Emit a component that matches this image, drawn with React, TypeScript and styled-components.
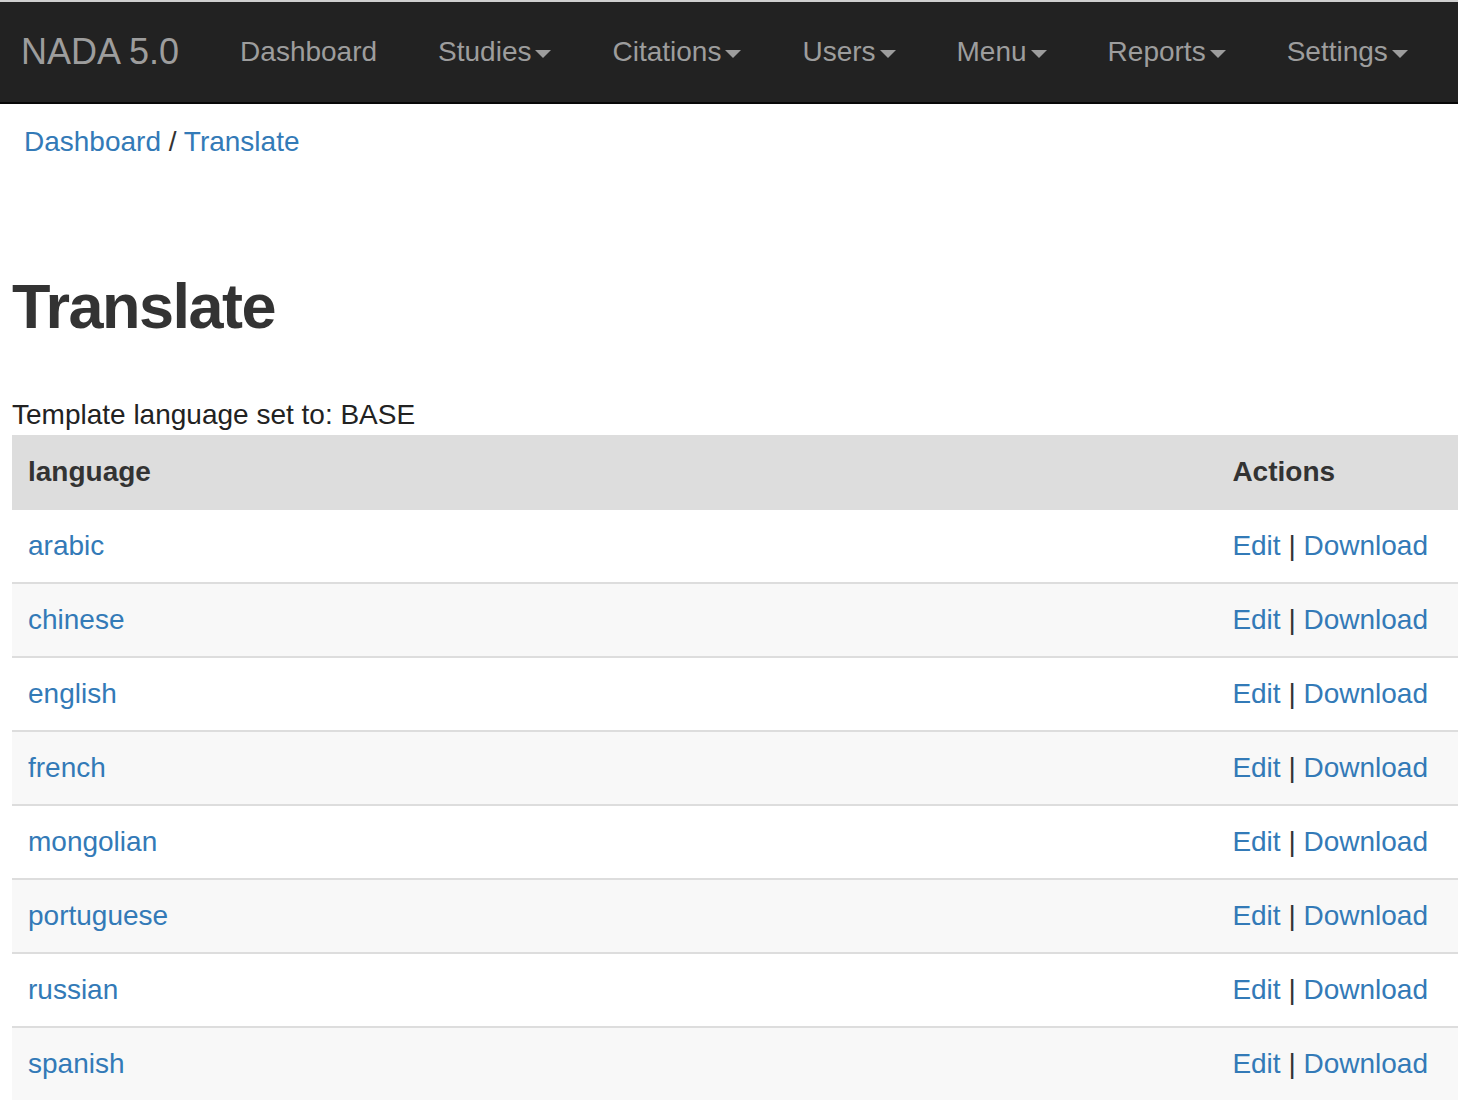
import React from "react";
import styled, { createGlobalStyle } from "styled-components";

const GlobalStyle = createGlobalStyle`
  html, body {
    margin: 0;
    padding: 0;
    background: #fff;
  }
  body {
    font-family: "Liberation Sans", Helvetica, Arial, sans-serif;
    font-size: 28px;
    line-height: 40px;
    color: #333;
  }
  * {
    box-sizing: border-box;
  }
`;

const Navbar = styled.nav`
  display: flex;
  align-items: center;
  height: 104px;
  background: #222;
  border-top: 2px solid #cfcfcf;
  border-bottom: 2px solid #080808;
`;

const Brand = styled.a`
  font-size: 36px;
  line-height: 40px;
  padding: 30px 30px 30px 21px;
  color: #9d9d9d;
  text-decoration: none;
`;

const NavList = styled.ul`
  display: flex;
  margin: 0;
  padding: 0;
  list-style: none;
`;

const NavLink = styled.a`
  display: block;
  padding: 30px 30px 30px 31px;
  font-size: 28px;
  line-height: 40px;
  color: #9d9d9d;
  text-decoration: none;
`;

const Caret = styled.span`
  display: inline-block;
  width: 0;
  height: 0;
  margin-left: 4px;
  vertical-align: middle;
  border-top: 8px solid #9d9d9d;
  border-left: 8px solid transparent;
  border-right: 8px solid transparent;
`;

const Container = styled.main`
  padding: 0 0 0 12px;
`;

const Breadcrumb = styled.div`
  padding: 18px 12px;
  color: #333;
`;

const Link = styled.a`
  color: #337ab7;
  text-decoration: none;
`;

const Title = styled.h1`
  margin: 91px 0 0;
  font-size: 63px;
  line-height: 70px;
  letter-spacing: -1.5px;
  font-weight: bold;
  color: #333;
`;

const Note = styled.p`
  margin: 54px 0 0;
  color: #222;
`;

const Table = styled.table`
  width: 100%;
  border-collapse: collapse;
  border-spacing: 0;
`;

const Th = styled.th<{ $right?: boolean }>`
  text-align: left;
  font-weight: bold;
  color: #333;
  background: #ddd;
  padding: ${({ $right }) => ($right ? "17px 30px 16px 16px" : "17px 16px 16px")};
  border-bottom: 2px solid #ddd;
  white-space: nowrap;
  width: ${({ $right }) => ($right ? "1%" : "auto")};
`;

const Row = styled.tr<{ $striped: boolean }>`
  background: ${({ $striped }) => ($striped ? "#f8f8f8" : "#fff")};
`;

const Td = styled.td<{ $right?: boolean }>`
  padding: ${({ $right }) => ($right ? "16px 30px 16px 16px" : "16px")};
  border-top: 2px solid #ddd;
  white-space: nowrap;
`;

const Sep = styled.span`
  color: #333;
`;

const menus = [
  { label: "Dashboard", caret: false },
  { label: "Studies", caret: true },
  { label: "Citations", caret: true },
  { label: "Users", caret: true },
  { label: "Menu", caret: true },
  { label: "Reports", caret: true },
  { label: "Settings", caret: true },
];

const languages = [
  "arabic",
  "chinese",
  "english",
  "french",
  "mongolian",
  "portuguese",
  "russian",
  "spanish",
];

const App: React.FC = () => {
  return (
    <>
      <GlobalStyle />
      <Navbar>
        <Brand href="#">NADA 5.0</Brand>
        <NavList>
          {menus.map((m) => (
            <li key={m.label}>
              <NavLink href="#">
                {m.label}
                {m.caret && <Caret />}
              </NavLink>
            </li>
          ))}
        </NavList>
      </Navbar>
      <Container>
        <Breadcrumb>
          <Link href="#">Dashboard</Link> / <Link href="#">Translate</Link>
        </Breadcrumb>
        <Title>Translate</Title>
        <Note>Template language set to: BASE</Note>
        <Table>
          <thead>
            <tr>
              <Th>language</Th>
              <Th $right>Actions</Th>
            </tr>
          </thead>
          <tbody>
            {languages.map((lang, i) => (
              <Row key={lang} $striped={i % 2 === 1}>
                <Td>
                  <Link href="#">{lang}</Link>
                </Td>
                <Td $right>
                  <Link href="#">Edit</Link> <Sep>|</Sep>{" "}
                  <Link href="#">Download</Link>
                </Td>
              </Row>
            ))}
          </tbody>
        </Table>
      </Container>
    </>
  );
};

export default App;
